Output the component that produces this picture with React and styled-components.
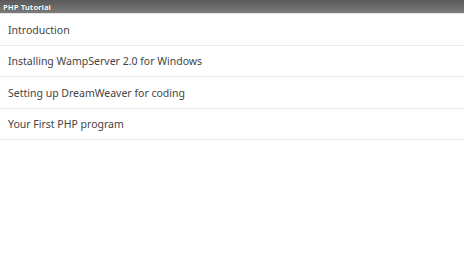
import React from "react";
import styled, { createGlobalStyle } from "styled-components";

const GlobalStyle = createGlobalStyle`
  html, body {
    margin: 0;
    padding: 0;
    background: #fff;
  }
`;

const lessons = [
  "Introduction",
  "Installing WampServer 2.0 for Windows",
  "Setting up DreamWeaver for coding",
  "Your First PHP program",
];

export default function App() {
  return (
    <>
      <GlobalStyle />
      <Screen>
        <TitleBar>PHP Tutorial</TitleBar>
        <List>
          {lessons.map((l) => (
            <Row key={l}>{l}</Row>
          ))}
        </List>
      </Screen>
    </>
  );
}

const Screen = styled.div`
  width: 464px;
  height: 261px;
  background: #fff;
  display: flex;
  flex-direction: column;
`;

const TitleBar = styled.div`
  height: 14px;
  display: flex;
  align-items: center;
  padding-left: 3px;
  background: linear-gradient(#595959, #7c7c7c);
  border-bottom: 1px solid #e6e6e6;
  box-sizing: border-box;
  color: #fff;
  font-family: "Noto Sans", "DejaVu Sans", sans-serif;
  font-weight: bold;
  font-size: 7.8px;
  text-shadow: 0 0 1px #222;
`;

const List = styled.div`
  display: flex;
  flex-direction: column;
`;

const Row = styled.div`
  height: 31.5px;
  box-sizing: border-box;
  display: flex;
  align-items: center;
  padding: 1px 0 0 8px;
  border-bottom: 1px solid #ebebeb;
  color: #444;
  font-family: "Noto Sans", "Open Sans", sans-serif;
  font-size: 10.5px;
`;
